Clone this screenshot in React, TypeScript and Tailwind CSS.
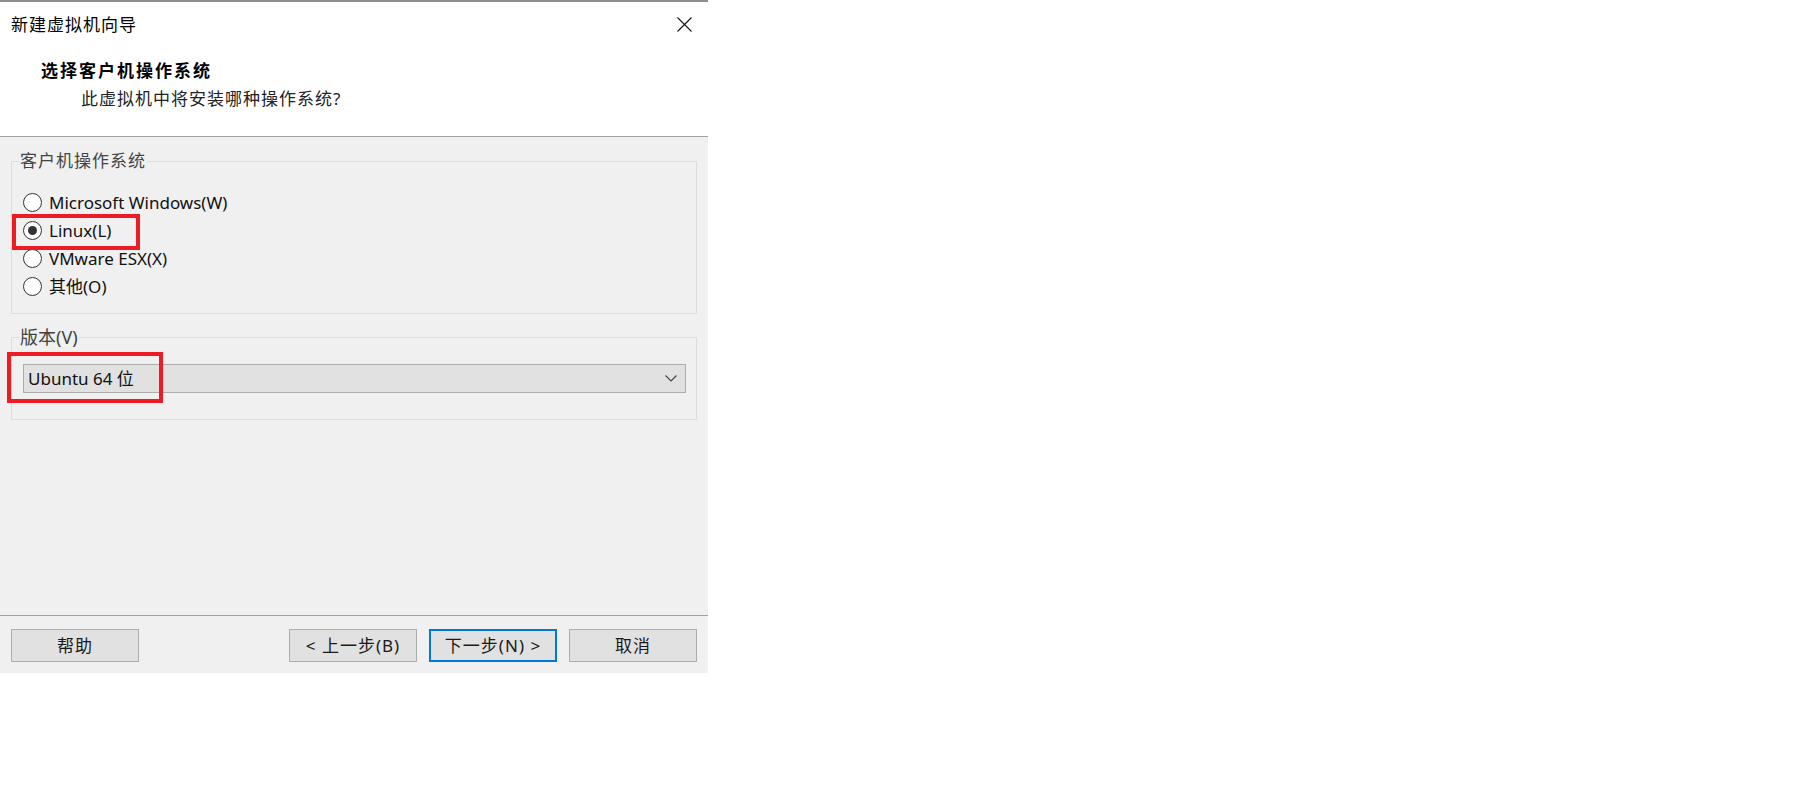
import React from "react";

const CJK = { fontFamily: '"Noto Sans", "Noto Sans CJK SC", sans-serif' };

function Radio({ checked, label }: { checked?: boolean; label: string }) {
  return (
    <div className="flex h-[28px] items-center">
      <span className="flex h-[19px] w-[19px] items-center justify-center rounded-full border border-[#333333] bg-white">
        {checked && <span className="h-[9px] w-[9px] rounded-full bg-[#333333]" />}
      </span>
      <span className="ml-[7px] text-[17px] leading-none text-[#111111]">{label}</span>
    </div>
  );
}

function Button({ children, primary }: { children: React.ReactNode; primary?: boolean }) {
  return (
    <div
      className={
        "flex h-[33px] w-[128px] items-center justify-center bg-[#e1e1e1] text-[17px] tracking-[1px] text-[#1a1a1a] " +
        (primary ? "border-2 border-[#0078d7]" : "border border-[#adadad]")
      }
    >
      {children}
    </div>
  );
}

export default function App() {
  return (
    <div className="min-h-[799px] w-full bg-white" style={CJK}>
      <div className="flex h-[673px] w-[708px] flex-col border-t-2 border-[#8f8f8f] bg-[#f0f0f0]">
        {/* header */}
        <div className="flex h-[135px] flex-col border-b border-[#a0a0a0] bg-white">
          <div className="flex h-[46px] items-center justify-between pl-[11px] pr-[16px]">
            <span className="text-[17px] tracking-[1px] text-black">新建虚拟机向导</span>
            <svg width="15" height="15" viewBox="0 0 15 15" className="mb-[1px]">
              <line x1="0.5" y1="0.5" x2="14.5" y2="14.5" stroke="#111" strokeWidth="1.1" />
              <line x1="14.5" y1="0.5" x2="0.5" y2="14.5" stroke="#111" strokeWidth="1.1" />
            </svg>
          </div>
          <div className="mt-[10px] pl-[41px] text-[17px] font-bold leading-[26px] tracking-[2px] text-black">
            选择客户机操作系统
          </div>
          <div className="mt-[2px] pl-[81px] text-[17px] leading-[26px] tracking-[1px] text-[#222222]">
            此虚拟机中将安装哪种操作系统?
          </div>
        </div>

        {/* body */}
        <div className="flex flex-1 flex-col px-[11px]">
          <div className="relative mt-[24px] h-[153px] border border-[#dcdcdc] pl-[11px] pt-[26px]">
            <span className="absolute left-[7px] top-[-12px] bg-[#f0f0f0] px-[1px] text-[17px] leading-[22px] tracking-[1px] text-[#444444]">
              客户机操作系统
            </span>
            <Radio label="Microsoft Windows(W)" />
            <Radio checked label="Linux(L)" />
            <Radio label="VMware ESX(X)" />
            <Radio label="其他(O)" />
            <div className="absolute left-[0px] top-[52px] h-[36px] w-[128px] border-4 border-[#ed1c24]" />
          </div>

          <div className="relative mt-[23px] h-[83px] border border-[#dcdcdc] pl-[11px] pr-[10px] pt-[26px]">
            <span className="absolute left-[7px] top-[-12px] bg-[#f0f0f0] px-[1px] text-[18px] leading-[22px] text-[#444444]">
              版本(V)
            </span>
            <div className="flex h-[29px] items-center justify-between border border-[#adadad] bg-[#e1e1e1] pl-[4px] pr-[8px]">
              <span className="text-[17px] text-[#111111]">Ubuntu 64 位</span>
              <svg width="12" height="7" viewBox="0 0 12 7">
                <polyline points="0.5,0.5 6,6 11.5,0.5" fill="none" stroke="#444" strokeWidth="1.1" />
              </svg>
            </div>
            <div className="absolute left-[-5px] top-[14px] h-[51px] w-[156px] border-4 border-[#ed1c24]" />
          </div>
        </div>

        {/* footer */}
        <div className="flex h-[58px] items-start justify-between border-t border-[#a0a0a0] px-[11px] pt-[13px]">
          <Button>帮助</Button>
          <div className="flex gap-[12px]">
            <Button>&lt; 上一步(B)</Button>
            <Button primary>下一步(N) &gt;</Button>
            <Button>取消</Button>
          </div>
        </div>
      </div>
    </div>
  );
}
